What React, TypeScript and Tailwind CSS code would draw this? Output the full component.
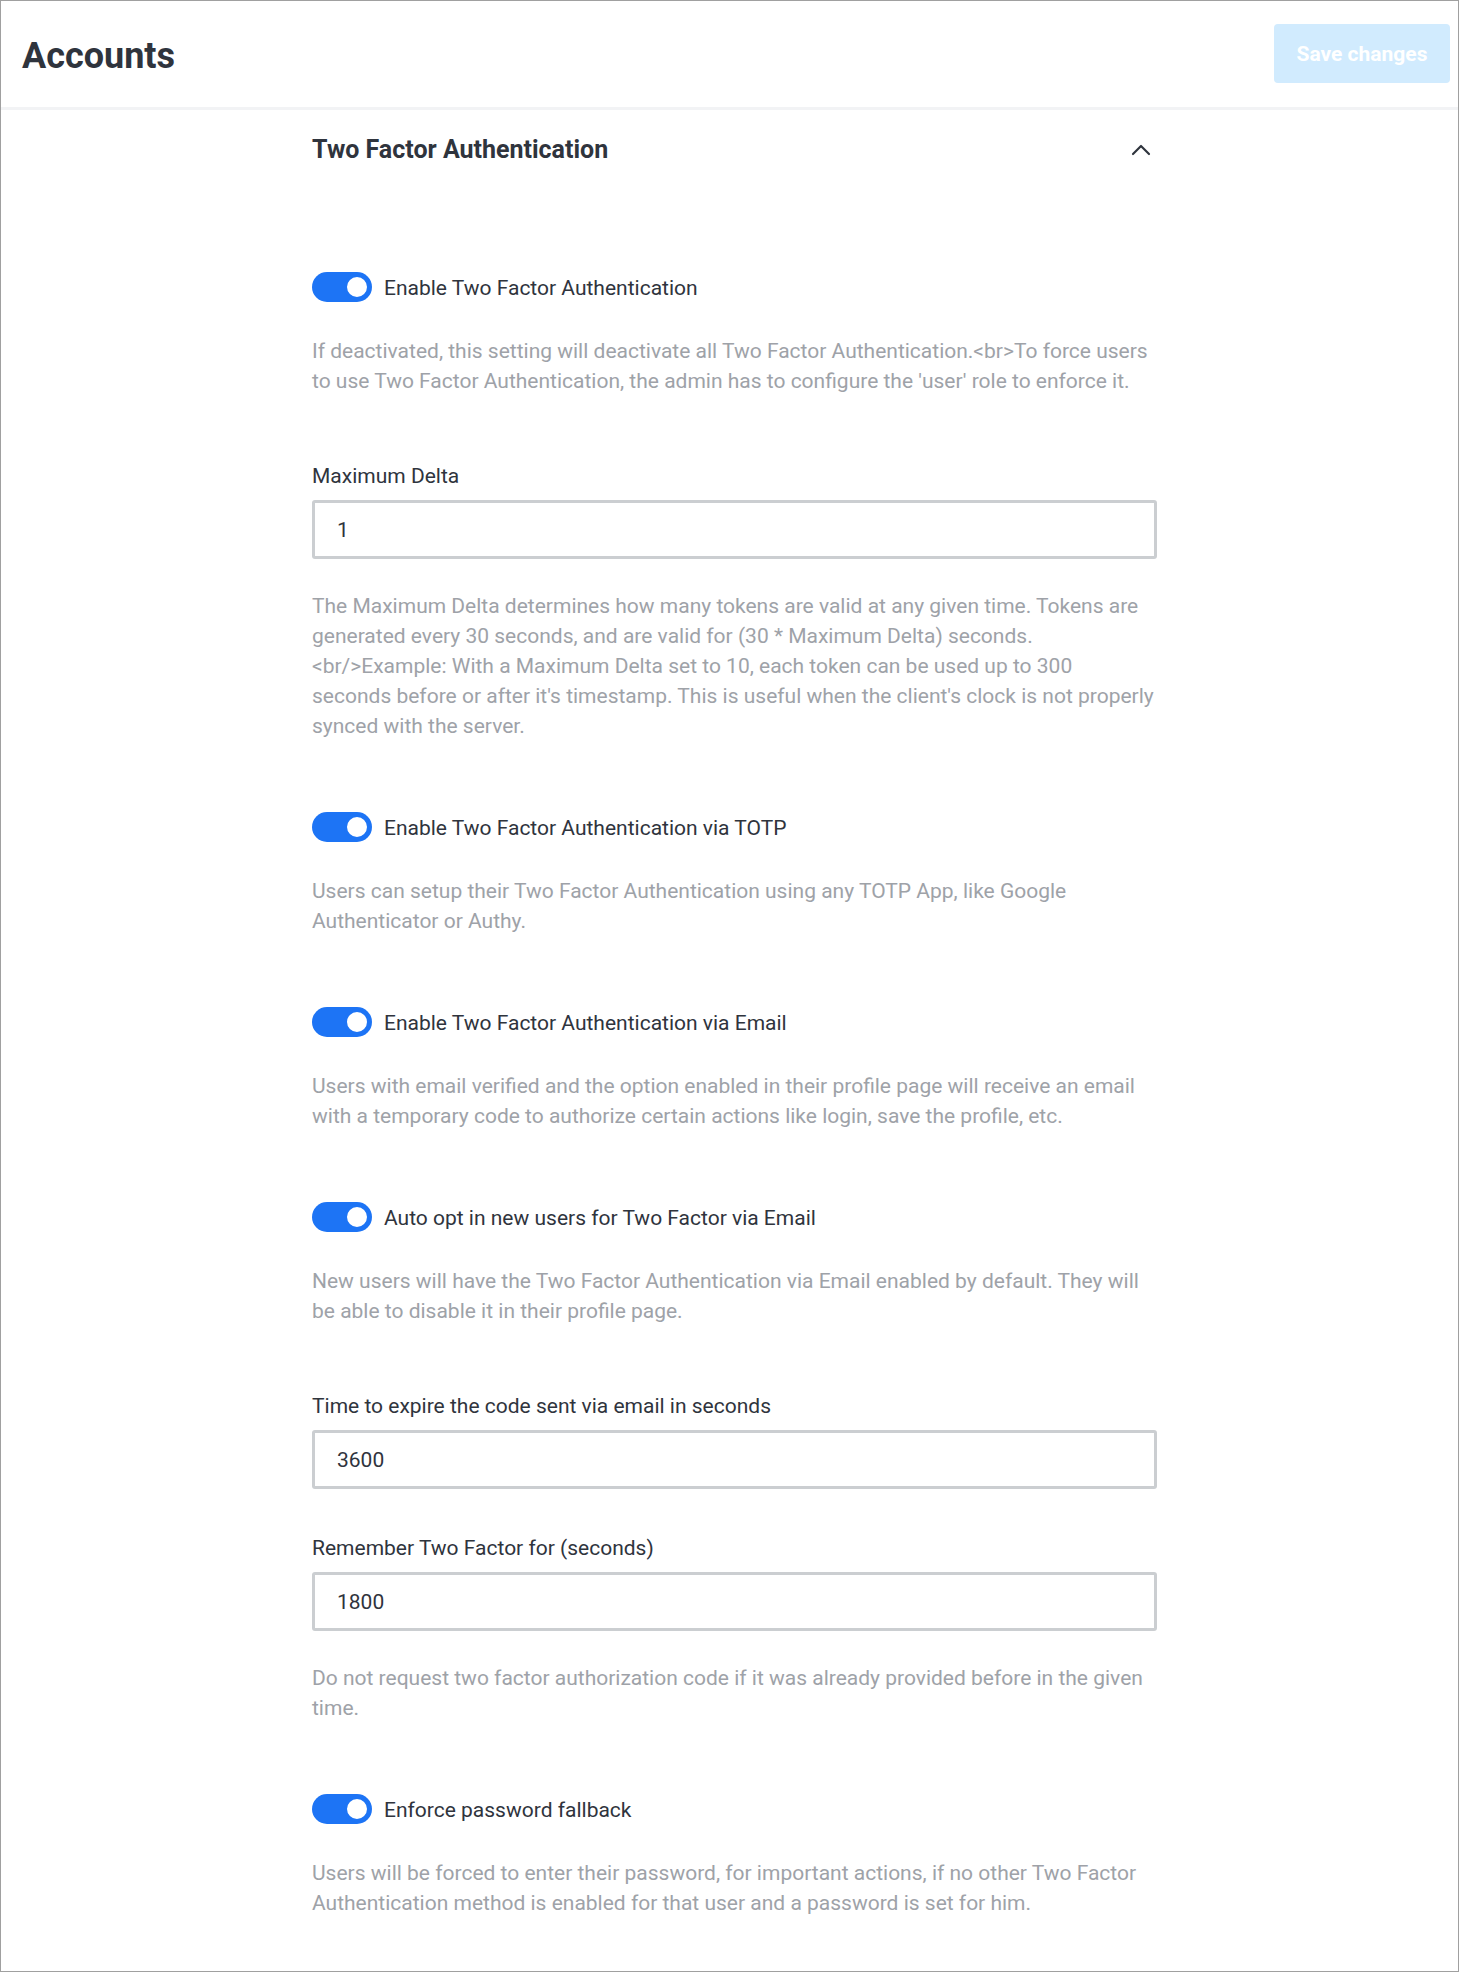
import React from 'react';
import { ChevronUp } from 'lucide-react';

type Setting =
  | { kind: 'toggle'; label: string; hint: string; mt: string }
  | { kind: 'input'; label: string; value: string; hint?: string; mt: string };

const settings: Setting[] = [
  {
    kind: 'toggle',
    label: 'Enable Two Factor Authentication',
    hint: "If deactivated, this setting will deactivate all Two Factor Authentication.<br>To force users to use Two Factor Authentication, the admin has to configure the 'user' role to enforce it.",
    mt: 'mt-[79px]',
  },
  {
    kind: 'input',
    label: 'Maximum Delta',
    value: '1',
    hint: "The Maximum Delta determines how many tokens are valid at any given time. Tokens are generated every 30 seconds, and are valid for (30 * Maximum Delta) seconds. <br/>Example: With a Maximum Delta set to 10, each token can be used up to 300 seconds before or after it's timestamp. This is useful when the client's clock is not properly synced with the server.",
    mt: 'mt-[65px]',
  },
  {
    kind: 'toggle',
    label: 'Enable Two Factor Authentication via TOTP',
    hint: 'Users can setup their Two Factor Authentication using any TOTP App, like Google Authenticator or Authy.',
    mt: 'mt-[68px]',
  },
  {
    kind: 'toggle',
    label: 'Enable Two Factor Authentication via Email',
    hint: 'Users with email verified and the option enabled in their profile page will receive an email with a temporary code to authorize certain actions like login, save the profile, etc.',
    mt: 'mt-[68px]',
  },
  {
    kind: 'toggle',
    label: 'Auto opt in new users for Two Factor via Email',
    hint: 'New users will have the Two Factor Authentication via Email enabled by default. They will be able to disable it in their profile page.',
    mt: 'mt-[68px]',
  },
  {
    kind: 'input',
    label: 'Time to expire the code sent via email in seconds',
    value: '3600',
    mt: 'mt-[65px]',
  },
  {
    kind: 'input',
    label: 'Remember Two Factor for (seconds)',
    value: '1800',
    hint: 'Do not request two factor authorization code if it was already provided before in the given time.',
    mt: 'mt-[44px]',
  },
  {
    kind: 'toggle',
    label: 'Enforce password fallback',
    hint: 'Users will be forced to enter their password, for important actions, if no other Two Factor Authentication method is enabled for that user and a password is set for him.',
    mt: 'mt-[68px]',
  },
];

const Toggle = () => (
  <span className="relative inline-flex h-[30px] w-[60px] shrink-0 items-center rounded-full bg-[#1d74f5]">
    <span className="absolute right-[2px] h-[26px] w-[26px] rounded-full border-[3px] border-[#1d74f5] bg-white" />
  </span>
);

const Hint = ({ text, mt }: { text: string; mt: string }) => (
  <p className={`${mt} max-w-[842px] text-[21px] leading-[30px] text-[#9ea2a8]`}>{text}</p>
);

export default function App() {
  return (
    <div
      className="h-[1972px] overflow-hidden border border-[#a0a0a0] bg-white text-[#2f343d]"
      style={{ fontFamily: 'Roboto, "Noto Sans", sans-serif' }}
    >
      <header className="flex h-[109px] items-center justify-between border-b-[3px] border-[#f2f3f5] pl-[21px] pr-[8px]">
        <h1 className="mt-[4px] text-[36px] font-bold leading-none">Accounts</h1>
        <button className="mt-[-2px] h-[59px] w-[176px] rounded-[4px] bg-[#d1ebfe] pt-[3px] text-[21px] font-bold text-white">
          Save changes
        </button>
      </header>

      <main className="ml-[311px] w-[845px]">
        <div className="flex h-[80px] items-center justify-between">
          <h2 className="text-[25px] font-bold">Two Factor Authentication</h2>
          <ChevronUp className="text-[#2f343d]" size={32} strokeWidth={1.6} />
        </div>

        {settings.map((s, i) =>
          s.kind === 'toggle' ? (
            <div key={i} className={s.mt}>
              <label className="flex h-[36px] items-center gap-[12px]">
                <Toggle />
                <span className="pt-[2px] text-[21px] leading-[30px]">{s.label}</span>
              </label>
              <Hint text={s.hint} mt="mt-[31px]" />
            </div>
          ) : (
            <div key={i} className={s.mt}>
              <div className="text-[21px] leading-[30px]">{s.label}</div>
              <div className="mt-[9px] flex h-[59px] items-center rounded-[3px] border-[3px] border-[#cbced1] px-[22px] pt-[3px] text-[21px]">
                {s.value}
              </div>
              {s.hint && <Hint text={s.hint} mt="mt-[32px]" />}
            </div>
          )
        )}
      </main>
    </div>
  );
}
